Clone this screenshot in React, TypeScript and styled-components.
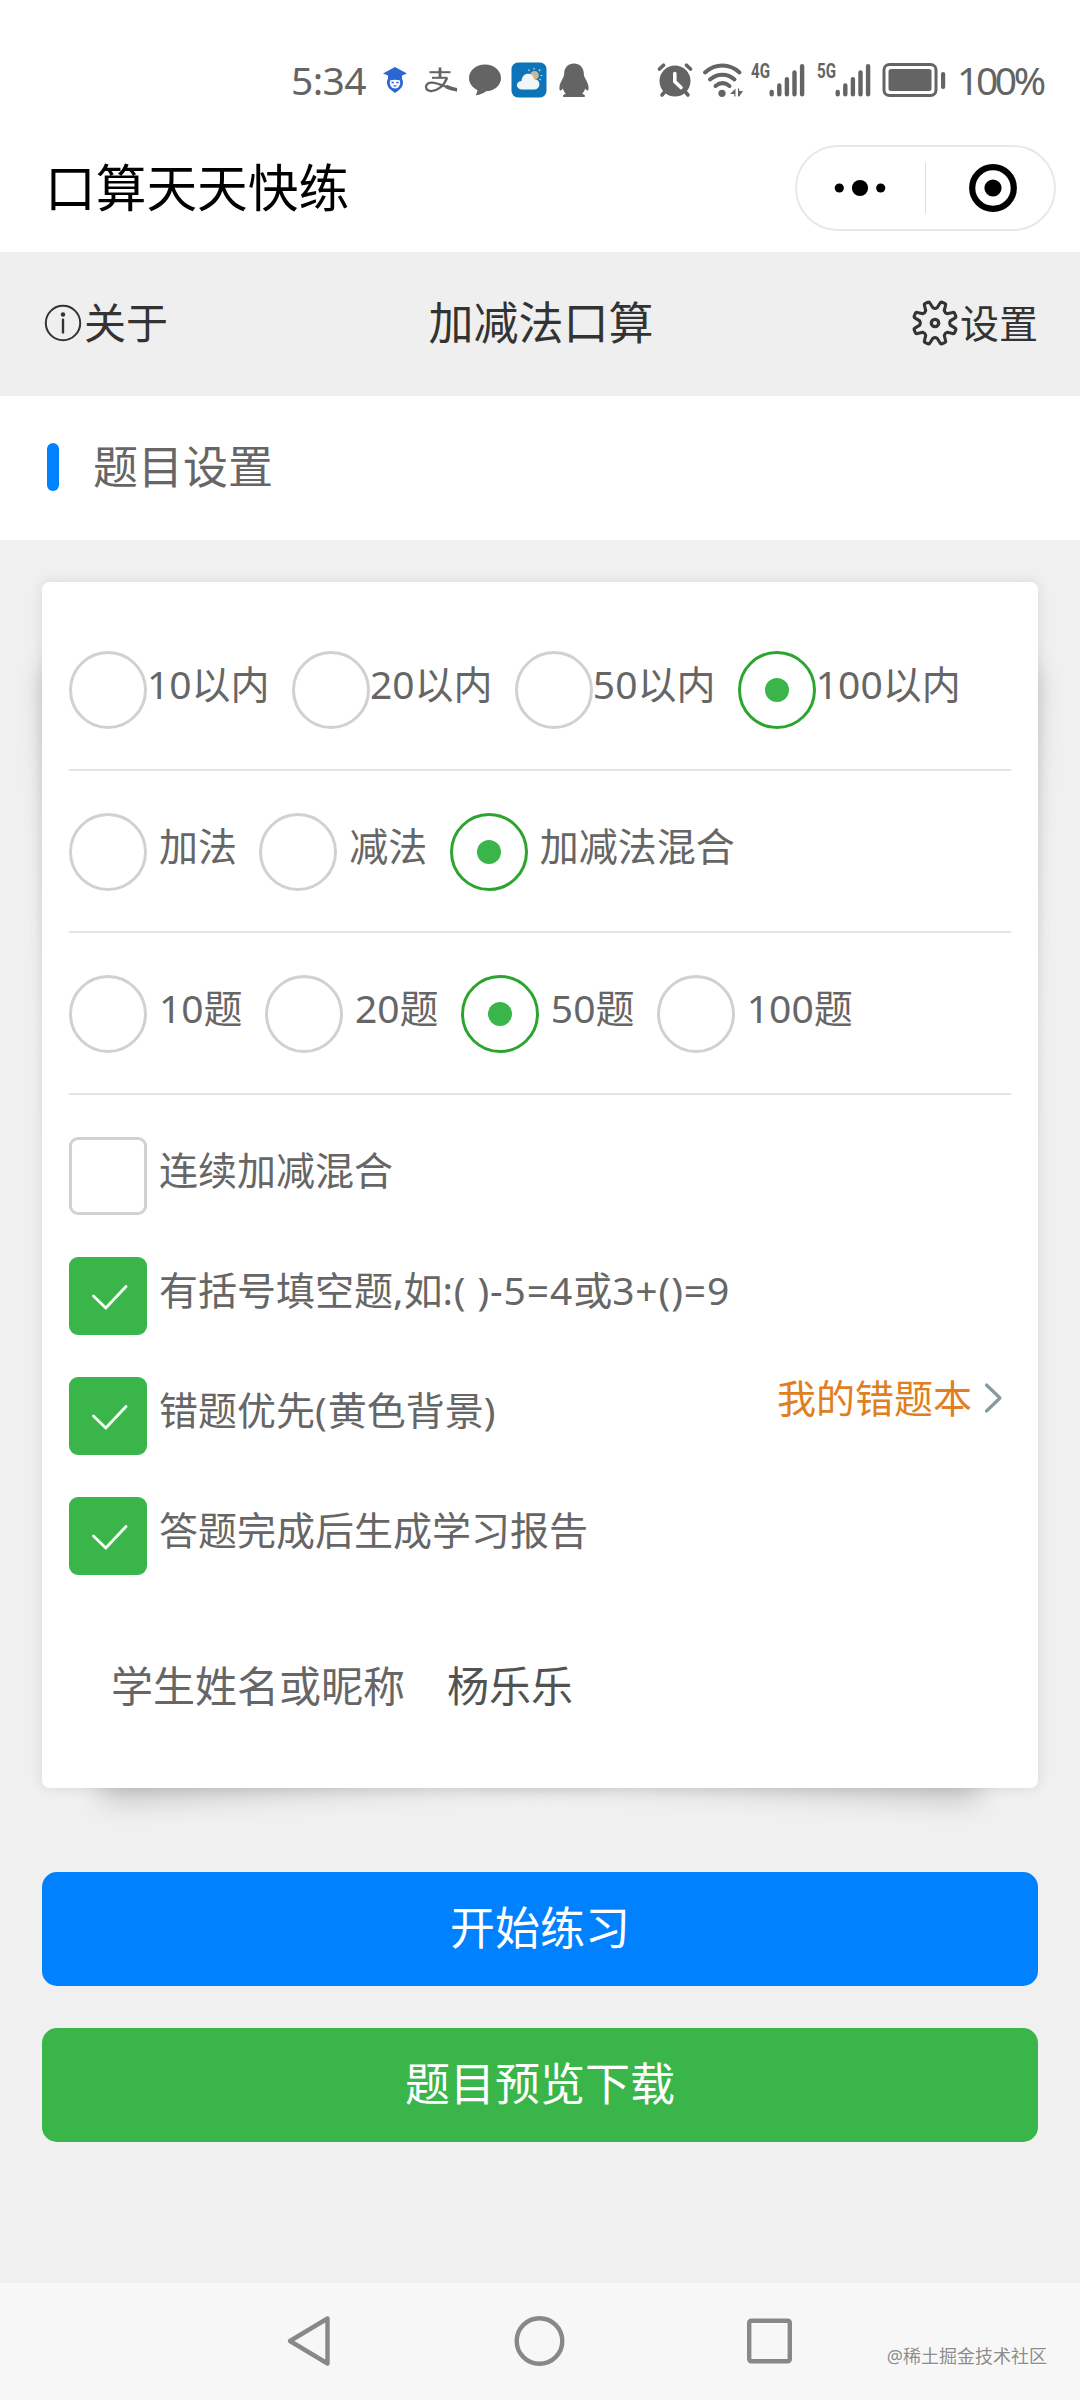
import React, { useState } from "react";
import styled, { createGlobalStyle, css } from "styled-components";

const GlobalStyle = createGlobalStyle`
  *, *::before, *::after { box-sizing: border-box; }
  html, body { margin: 0; padding: 0; background: #f0f0f0; }
  body {
    font-family: "Noto Sans", "Noto Sans CJK SC", sans-serif;
    color: #666;
    -webkit-font-smoothing: antialiased;
  }
  button { font-family: inherit; }
`;

const Screen = styled.div`
  width: 1080px;
  height: 2400px;
  display: flex;
  flex-direction: column;
  overflow: hidden;
  background: #f0f0f0;
`;

/* ---------- status bar ---------- */

const StatusBar = styled.header`
  height: 124px;
  padding: 36px 36px 0 291px;
  display: flex;
  align-items: center;
  justify-content: space-between;
  background: #fff;
  color: #646464;
`;

const StatusGroup = styled.div`
  display: flex;
  align-items: center;
`;

const StatusIcon = styled.svg<{ $gap: number }>`
  display: block;
  flex: none;
  margin-left: ${(p) => p.$gap}px;
`;

const StatusText = styled.span`
  font-size: 39px;
  line-height: 44px;
  white-space: nowrap;
`;

const Clock = styled(StatusText)`
  width: 78px;
  letter-spacing: -0.6px;
`;

const Percent = styled(StatusText)`
  width: 87px;
  margin-left: 10px;
  letter-spacing: -3.4px;
`;

const NetworkLabel = styled.span<{ $gap: number }>`
  width: 18px;
  margin: 0 0 19px ${(p) => p.$gap}px;
  font-family: Roboto, sans-serif;
  font-size: 21px;
  font-weight: 700;
  line-height: 16px;
  white-space: nowrap;
  transform: scaleX(0.72);
  transform-origin: left center;
`;

/* ---------- mini program title ---------- */

const TitleBar = styled.div`
  height: 128px;
  padding: 0 24px 0 45px;
  display: flex;
  align-items: center;
  justify-content: space-between;
  background: #fff;
`;

const AppTitle = styled.h1`
  margin: 0;
  font-size: 50.7px;
  font-weight: 400;
  line-height: 60px;
  color: #000;
`;

const Capsule = styled.div`
  width: 261px;
  height: 86px;
  display: grid;
  grid-template-columns: 1fr 1px 1fr;
  align-items: center;
  border: 2px solid #e8e8e8;
  border-radius: 43px;
`;

const CapsuleDivider = styled.span`
  height: 50px;
  background: #dcdcdc;
`;

const CapsuleButton = styled.button<{ $left?: number; $right?: number }>`
  height: 100%;
  padding: 0 ${(p) => p.$right ?? 0}px 0 ${(p) => p.$left ?? 0}px;
  display: flex;
  align-items: center;
  justify-content: center;
  border: 0;
  background: none;
`;

/* ---------- navigation ---------- */

const NavBar = styled.nav`
  height: 144px;
  padding: 0 42px 3px 44px;
  display: grid;
  grid-template-columns: 1fr auto 1fr;
  align-items: center;
  background: #efefef;
  color: #333;
`;

const NavLink = styled.div<{ $size: number; $end?: boolean }>`
  display: flex;
  align-items: center;
  justify-content: ${(p) => (p.$end ? "flex-end" : "flex-start")};
  gap: ${(p) => (p.$end ? 1 : 2)}px;
  font-size: ${(p) => p.$size}px;
  line-height: 54px;
`;

const NavTitle = styled.h2`
  margin: 0;
  font-size: 45px;
  font-weight: 400;
  line-height: 56px;
`;

const SectionBar = styled.div`
  height: 144px;
  padding: 0 0 2px 47px;
  display: flex;
  align-items: center;
  gap: 34px;
  background: #fff;
`;

const SectionMark = styled.span`
  width: 12px;
  height: 48px;
  border-radius: 6px;
  background: #0081ff;
`;

const SectionTitle = styled.h3`
  margin: 0;
  font-size: 45px;
  font-weight: 400;
  line-height: 56px;
`;

/* ---------- settings card ---------- */

const Content = styled.main`
  flex: 1;
  padding: 42px 42px 0;
  isolation: isolate;
  background: #f0f0f0;
`;

const warp = css`
  content: "";
  position: absolute;
  top: 29px;
  bottom: 43px;
  width: 50%;
  z-index: -1;
  box-shadow: 0 43px 29px rgba(0, 0, 0, 0.2);
`;

const Card = styled.section`
  position: relative;
  height: 1206px;
  padding: 27px 27px 0;
  border-radius: 8px;
  background: #fff;
  box-shadow: 0 0 14px rgba(0, 0, 0, 0.1);

  &::before {
    ${warp}
    left: 29px;
    transform: rotate(-3deg);
  }
  &::after {
    ${warp}
    right: 29px;
    transform: rotate(3deg);
  }
`;

const RadioRow = styled.div`
  height: 162px;
  padding-top: 2px;
  display: flex;
  align-items: center;
  gap: 22.3px;
  border-bottom: 2px solid #e4e4e4;
`;

const Option = styled.label<{ $gap?: number }>`
  display: flex;
  align-items: center;
  gap: ${(p) => p.$gap ?? 12}px;
`;

const OptionText = styled.span`
  padding-bottom: 12px;
  font-size: 39px;
  line-height: 50px;
  white-space: pre;
`;

const Formula = styled.span`
  letter-spacing: 0.9px;
`;

const RadioMark = styled.span<{ $on: boolean }>`
  width: 78px;
  height: 78px;
  flex: none;
  display: flex;
  align-items: center;
  justify-content: center;
  border: 3px solid ${(p) => (p.$on ? "#2ba52e" : "#d1d1d1")};
  border-radius: 50%;

  &::after {
    content: "";
    width: 24px;
    height: 24px;
    border-radius: 50%;
    background: ${(p) => (p.$on ? "#39b54a" : "transparent")};
  }
`;

const CheckList = styled.div`
  padding-top: 21px;
`;

const CheckRow = styled.div`
  height: 120px;
  display: flex;
  align-items: center;
  justify-content: space-between;
`;

const CheckMark = styled.span<{ $on: boolean }>`
  width: 78px;
  height: 78px;
  flex: none;
  border: 3px solid ${(p) => (p.$on ? "#39b54a" : "#d1d1d1")};
  border-radius: 9px;
  background: ${(p) => (p.$on ? "#39b54a" : "#fff")};

  svg {
    display: block;
    margin: -3px;
  }
`;

const MistakeLink = styled.div`
  margin: 0 8px 36px 0;
  display: flex;
  align-items: center;
  gap: 11px;
  font-size: 39px;
  line-height: 50px;
  color: #e07e22;
`;

const NameRow = styled.div`
  height: 140px;
  margin-top: 20px;
  padding-left: 42px;
  display: flex;
  align-items: center;
  gap: 42px;
  font-size: 42px;
  line-height: 54px;
`;

const StudentName = styled.span`
  color: #525252;
`;

/* ---------- actions ---------- */

const Actions = styled.div`
  margin-top: 84px;
  display: flex;
  flex-direction: column;
  gap: 42px;
`;

const ActionButton = styled.button<{ $color: string }>`
  height: 114px;
  padding: 0 0 3px;
  border: 0;
  border-radius: 15px;
  background: ${(p) => p.$color};
  color: #fff;
  font-size: 45px;
  line-height: 56px;
`;

/* ---------- system navigation ---------- */

const SystemBar = styled.footer`
  position: relative;
  height: 117px;
  padding: 0 285px 2px 285px;
  display: flex;
  align-items: center;
  justify-content: space-between;
  background: #f7f7f7;
`;

const Watermark = styled.span`
  position: absolute;
  right: 33px;
  bottom: 31px;
  font-size: 18px;
  line-height: 26px;
  color: #8c8c8c;
  text-shadow: 1px 1px 0 #fff;
`;

/* ---------- drawings ---------- */

const gearPath = (() => {
  const at = (deg: number, r: number) => {
    const a = (deg * Math.PI) / 180;
    return `${(24 + r * Math.sin(a)).toFixed(2)} ${(24 - r * Math.cos(a)).toFixed(2)}`;
  };
  let d = "";
  for (let i = 0; i < 8; i++) {
    const c = 22.5 + i * 45;
    d += `${i ? "L" : "M"}${at(c - 14.5, 15.4)}L${at(c - 8.5, 20.4)}Q${at(c - 7.5, 22)} ${at(c - 4, 21.9)}`;
    d += `L${at(c + 4, 21.9)}Q${at(c + 7.5, 22)} ${at(c + 8.5, 20.4)}L${at(c + 14.5, 15.4)}`;
    d += `Q${at(c + 22.5, 14)} ${at(c + 30.5, 15.4)}`;
  }
  return d + "Z";
})();

const Gear = () => (
  <svg width="48" height="48" viewBox="0 0 48 48" fill="none" stroke="#333" strokeWidth="3.1" strokeLinejoin="round">
    <path d={gearPath} />
    <circle cx="24" cy="24" r="3.7" strokeWidth="3.300" />
  </svg>
);

const Info = () => (
  <svg width="38" height="38" viewBox="0 0 38 38" fill="none" stroke="#333">
    <circle cx="19" cy="19" r="17.2" strokeWidth="2" />
    <circle cx="19" cy="10.5" r="2.2" fill="#333" stroke="none" />
    <path d="M19 15.8V28.4" strokeWidth="2.4" strokeLinecap="round" />
  </svg>
);

const ScholarIcon = () => (
  <StatusIcon $gap={13} width="26" height="28" viewBox="0 0 26 28">
    <path d="M13 1L25 7.500L20 9.600V12H6V9.600L1 7.500Z" fill="#2a67d5" />
    <path d="M13 8.500c5 0 8 3.500 8 8.300 0 3.600-2.400 6.400-5 8L13 27l-3-2.200c-2.600-1.600-5-4.400-5-8 0-4.800 3-8.300 8-8.300Z" fill="#2a67d5" />
    <path d="M8 14.500c3-1 7-1 10 0 .8 4.500-1.500 8-5 8s-5.800-3.500-5-8Z" fill="#fff" />
    <path d="M9.500 16.500h2.400M14.200 16.500h2.400M11.500 19.800h3" stroke="#2a67d5" strokeWidth="1.300" />
  </StatusIcon>
);

const AlipayIcon = () => (
  <StatusIcon $gap={16} width="34" height="28" viewBox="0 0 34 28" fill="none" stroke="#646464">
    <path d="M5.500 6.200H26.500" strokeWidth="2" />
    <path d="M16 1.500V11.500" strokeWidth="2.800" />
    <path d="M8 11.800H23.500" strokeWidth="2" />
    <path d="M23 12C20 20 13 25.500 6.500 25C.5 24.300 .5 17.300 7 16.600C15 16 22 22.300 33 24.300" strokeWidth="2.300" />
    <path d="M22 20.500C26 22.300 29 23.300 33 23.800" strokeWidth="3.600" />
  </StatusIcon>
);

const BubbleIcon = () => (
  <StatusIcon $gap={10} width="34" height="34" viewBox="0 0 34 34">
    <path d="M17 1.500c9 0 16 6 16 13.500s-7 13.300-15 13.300c-2.500 2-5.500 3.500-10.500 3.900 1.300-1.700 1.900-3.400 1.800-5.300C4.300 24.500 1 20.300 1 15 1 7.500 8 1.500 17 1.500Z" fill="#646464" />
  </StatusIcon>
);

const WeatherIcon = () => (
  <StatusIcon $gap={9} width="36" height="36" viewBox="0 0 36 36">
    <rect x=".5" y=".5" width="35" height="35" rx="6.500" fill="#0c74b9" />
    <circle cx="23.500" cy="13.200" r="4.300" fill="#cdb791" />
    <path d="M23 7.500V6M28 9l1.300-1.600M29.500 13.500h1.800M18.500 9l-1-1.500M28.500 17l1.200 1" stroke="#e6d9b8" strokeWidth="1.200" />
    <path d="M11.500 27.500c-7 0-7.500-8-1-8.500.3-4.500 3-7.200 6.500-7.200 3.500 0 5.500 2.200 6.200 5.500 6.800-.5 7 10.200.3 10.200Z" fill="#f1f6fb" />
  </StatusIcon>
);

const PenguinIcon = () => (
  <StatusIcon $gap={11} width="32" height="36" viewBox="0 0 32 36">
    <path d="M16 1.500c5.800 0 9.600 4.200 9.800 9.500.1 2 .2 3 1 4.600 1.600 3.200 3.800 6.700 3.800 10.300 0 3.300-1.300 3.500-3.500.6-.5 2.100-1.400 3.800-2.800 5.200 3.200 1 3.500 3.300 1.300 3.300H6.400c-2.200 0-1.900-2.300 1.300-3.300-1.400-1.400-2.300-3.100-2.800-5.200-2.200 2.900-3.500 2.700-3.500-.6 0-3.600 2.200-7.100 3.800-10.300.8-1.600.9-2.600 1-4.600C6.400 5.700 10.200 1.500 16 1.500Z" fill="#646464" />
  </StatusIcon>
);

const AlarmIcon = () => (
  <StatusIcon $gap={0} width="36" height="36" viewBox="0 0 36 36" fill="none" stroke="#646464" strokeLinecap="round">
    <circle cx="18" cy="19" r="15.500" fill="#646464" stroke="none" />
    <path d="M2.500 7L6.500 3.200M33.500 7L29.500 3.200" strokeWidth="3.600" />
    <path d="M8 29.500L5 33M28 29.500L31 33" strokeWidth="3.600" />
    <path d="M17.800 11.500V19.500L24 25.500" stroke="#fff" strokeWidth="3.600" />
  </StatusIcon>
);

const WifiIcon = () => (
  <StatusIcon $gap={9} width="42" height="36" viewBox="0 0 42 36" fill="none" stroke="#646464" strokeWidth="4" strokeLinecap="round">
    <path d="M3 10.500C13.500 1.200 27.500 1.200 37.500 10.500" />
    <path d="M8 17.500C15.500 11 25.500 11 32.500 17.500" />
    <path d="M13.500 24C18 20.300 23 20.300 27.500 24" />
    <circle cx="20" cy="31.300" r="3.600" fill="#646464" stroke="none" />
    <path d="M33.500 26.500V34.500H32.300V32H28L33.500 26.500ZM36 26.500V34.500H37.200L41 29H37.200V26.500Z" fill="#646464" stroke="none" />
  </StatusIcon>
);

const SignalIcon = () => (
  <StatusIcon $gap={0} width="36" height="36" viewBox="0 0 36 36" stroke="#646464" strokeWidth="4.400" strokeLinecap="round">
    <path d="M2.700 30V32.300M10.300 23.500V32.300M17.900 17.200V32.300M25.500 10.500V32.300M33.100 4.200V32.300" />
  </StatusIcon>
);

const BatteryIcon = () => (
  <StatusIcon $gap={11} width="65" height="36" viewBox="0 0 65 36">
    <rect x="2" y="2.500" width="52" height="31" rx="5.500" fill="none" stroke="#646464" strokeWidth="3" />
    <rect x="6.500" y="7" width="43" height="22" rx="2.500" fill="#646464" />
    <rect x="59" y="10" width="4.200" height="17" rx="2.100" fill="#646464" />
  </StatusIcon>
);

/* ---------- data ---------- */

type Group = { options: string[]; gap: number; initial: number };

const groups: Group[] = [
  { options: ["10以内", "20以内", "50以内", "100以内"], gap: 0, initial: 3 },
  { options: ["加法", "减法", "加减法混合"], gap: 12, initial: 2 },
  { options: ["10题", "20题", "50题", "100题"], gap: 12, initial: 2 },
];

const checks = [
  { label: "连续加减混合", on: false },
  { label: "有括号填空题,如:( )-5=4或3+()=9", on: true },
  { label: "错题优先(黄色背景)", on: true, link: "我的错题本" },
  { label: "答题完成后生成学习报告", on: true },
];

/* Runs that contain brackets are set slightly wider than plain text. */
const bracketRun = /([:()\-=+\d ]*[()][:()\-=+\d ]*)/;

const RadioGroup = ({ options, gap, initial }: Group) => {
  const [selected, setSelected] = useState(initial);
  return (
    <RadioRow>
      {options.map((text, i) => (
        <Option key={text} $gap={gap} onClick={() => setSelected(i)}>
          <RadioMark $on={i === selected} />
          <OptionText>{text}</OptionText>
        </Option>
      ))}
    </RadioRow>
  );
};

const CheckItem = ({ label, on, link }: { label: string; on: boolean; link?: string }) => {
  const [checked, setChecked] = useState(on);
  return (
    <CheckRow>
      <Option onClick={() => setChecked(!checked)}>
        <CheckMark $on={checked}>
          {checked && (
            <svg width="78" height="78" viewBox="0 0 78 78" fill="none" stroke="#f2fff2" strokeWidth="2.900" strokeLinecap="round" strokeLinejoin="round">
              <path d="M24.500 39L36.800 51L57 29.500" />
            </svg>
          )}
        </CheckMark>
        <OptionText>
          {label.split(bracketRun).map((run, i) => (i % 2 ? <Formula key={i}>{run}</Formula> : run))}
        </OptionText>
      </Option>
      {link && (
        <MistakeLink>
          {link}
          <svg width="20" height="32" viewBox="0 0 20 32" fill="none" stroke="#8799a3" strokeWidth="3.200" strokeLinecap="round" strokeLinejoin="round">
            <path d="M3.500 3L17 16L3.500 29" />
          </svg>
        </MistakeLink>
      )}
    </CheckRow>
  );
};

export default function App() {
  return (
    <>
      <GlobalStyle />
      <Screen>
        <StatusBar>
          <StatusGroup>
            <Clock>5:34</Clock>
            <ScholarIcon />
            <AlipayIcon />
            <BubbleIcon />
            <WeatherIcon />
            <PenguinIcon />
          </StatusGroup>
          <StatusGroup>
            <AlarmIcon />
            <WifiIcon />
            <NetworkLabel $gap={7}>4G</NetworkLabel>
            <SignalIcon />
            <NetworkLabel $gap={12}>5G</NetworkLabel>
            <SignalIcon />
            <BatteryIcon />
            <Percent>100%</Percent>
          </StatusGroup>
        </StatusBar>

        <TitleBar>
          <AppTitle>口算天天快练</AppTitle>
          <Capsule>
            <CapsuleButton $right={2}>
              <svg width="52" height="18" viewBox="0 0 52 18">
                <circle cx="5.300" cy="9" r="4.600" />
                <circle cx="26" cy="9" r="8.100" />
                <circle cx="46.700" cy="9" r="4.600" />
              </svg>
            </CapsuleButton>
            <CapsuleDivider />
            <CapsuleButton $left={5}>
              <svg width="50" height="50" viewBox="0 0 50 50">
                <circle cx="25" cy="25" r="20.800" fill="none" stroke="#000" strokeWidth="6.200" />
                <circle cx="25" cy="25" r="8.600" />
              </svg>
            </CapsuleButton>
          </Capsule>
        </TitleBar>

        <NavBar>
          <NavLink $size={42}>
            <Info />
            关于
          </NavLink>
          <NavTitle>加减法口算</NavTitle>
          <NavLink $size={39} $end>
            <Gear />
            设置
          </NavLink>
        </NavBar>

        <SectionBar>
          <SectionMark />
          <SectionTitle>题目设置</SectionTitle>
        </SectionBar>

        <Content>
          <Card>
            {groups.map((g) => (
              <RadioGroup key={g.options[0]} {...g} />
            ))}
            <CheckList>
              {checks.map((c) => (
                <CheckItem key={c.label} {...c} />
              ))}
            </CheckList>
            <NameRow>
              <span>学生姓名或昵称</span>
              <StudentName>杨乐乐</StudentName>
            </NameRow>
          </Card>
          <Actions>
            <ActionButton $color="#0081ff">开始练习</ActionButton>
            <ActionButton $color="#39b54a">题目预览下载</ActionButton>
          </Actions>
        </Content>

        <SystemBar>
          <svg width="48" height="54" viewBox="0 0 48 54" fill="none" stroke="#888" strokeWidth="4.400" strokeLinejoin="round">
            <path d="M42.500 4.500V49.500L5 27Z" />
          </svg>
          <svg width="54" height="54" viewBox="0 0 54 54" fill="none" stroke="#888" strokeWidth="4.400">
            <circle cx="27.500" cy="27" r="22.800" />
          </svg>
          <svg width="50" height="50" viewBox="0 0 50 50" fill="none" stroke="#888" strokeWidth="4.400">
            <rect x="4.200" y="4.700" width="40.600" height="40.600" rx="2" />
          </svg>
          <Watermark>@稀土掘金技术社区</Watermark>
        </SystemBar>
      </Screen>
    </>
  );
}
